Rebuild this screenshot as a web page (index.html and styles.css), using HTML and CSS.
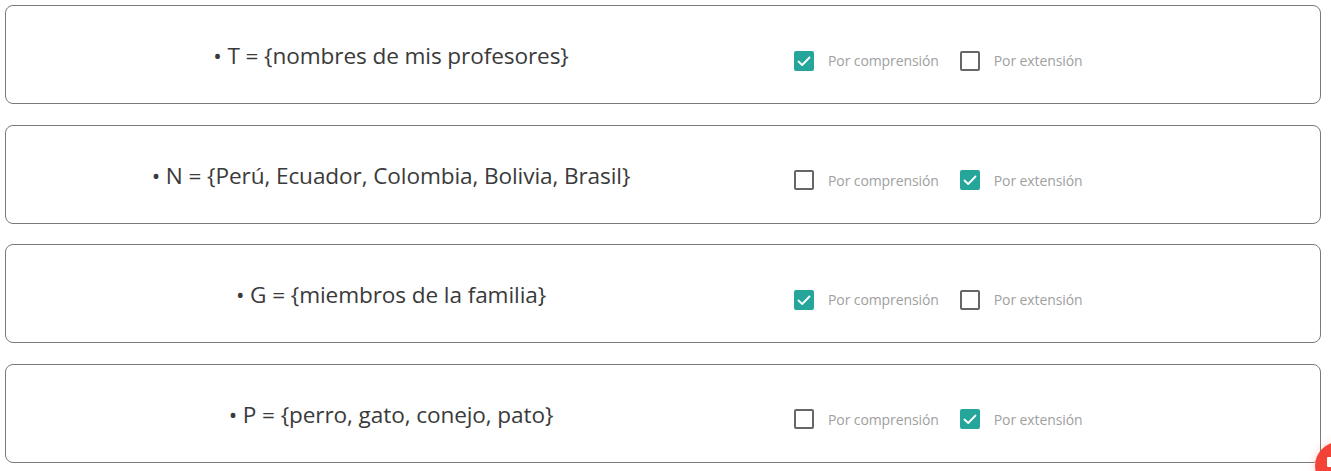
FILE: index.html
```html
<!DOCTYPE html>
<html lang="es">
<head>
<meta charset="utf-8">
<title>Conjuntos</title>
<link rel="stylesheet" href="styles.css">
</head>
<body>
<main class="list">
  <section class="card">
    <div class="statement">• T = {nombres de mis profesores}</div>
    <div class="options">
      <label class="opt"><span class="box checked"><svg viewBox="0 0 20 20"><path d="M4.5 10.5 L8.2 14 L15.5 6.5"/></svg></span><span class="lbl">Por comprensión</span></label>
      <label class="opt"><span class="box"></span><span class="lbl">Por extensión</span></label>
    </div>
  </section>
  <section class="card">
    <div class="statement">• N = {Perú, Ecuador, Colombia, Bolivia, Brasil}</div>
    <div class="options">
      <label class="opt"><span class="box"></span><span class="lbl">Por comprensión</span></label>
      <label class="opt"><span class="box checked"><svg viewBox="0 0 20 20"><path d="M4.5 10.5 L8.2 14 L15.5 6.5"/></svg></span><span class="lbl">Por extensión</span></label>
    </div>
  </section>
  <section class="card">
    <div class="statement">• G = {miembros de la familia}</div>
    <div class="options">
      <label class="opt"><span class="box checked"><svg viewBox="0 0 20 20"><path d="M4.5 10.5 L8.2 14 L15.5 6.5"/></svg></span><span class="lbl">Por comprensión</span></label>
      <label class="opt"><span class="box"></span><span class="lbl">Por extensión</span></label>
    </div>
  </section>
  <section class="card">
    <div class="statement">• P = {perro, gato, conejo, pato}</div>
    <div class="options">
      <label class="opt"><span class="box"></span><span class="lbl">Por comprensión</span></label>
      <label class="opt"><span class="box checked"><svg viewBox="0 0 20 20"><path d="M4.5 10.5 L8.2 14 L15.5 6.5"/></svg></span><span class="lbl">Por extensión</span></label>
    </div>
  </section>
</main>
<div class="fab"><span class="fab-icon"></span></div>
</body>
</html>
```

FILE: styles.css
```css
html, body {
  margin: 0;
  padding: 0;
  background: #ffffff;
  overflow: hidden;
}
body {
  font-family: "Open Sans", "Noto Sans", sans-serif;
  color: #333333;
}
.list {
  display: flex;
  flex-direction: column;
  gap: 20.5px;
  padding: 5px 10px 0 5px;
}
.card {
  box-sizing: border-box;
  height: 99px;
  border: 1px solid #7a7a7a;
  border-radius: 8px;
  display: flex;
  align-items: center;
  padding-top: 2px;
}
.statement {
  width: 770px;
  text-align: center;
  font-size: 22.6px;
  font-weight: 400;
  color: #3a3a3a;
  letter-spacing: -0.1px;
}
.options {
  display: flex;
  align-items: center;
  gap: 21px;
  padding-left: 18px;
  padding-top: 10px;
}
.opt {
  display: flex;
  align-items: center;
  gap: 14px;
}
.box {
  box-sizing: border-box;
  width: 20px;
  height: 20px;
  border: 2px solid #666666;
  border-radius: 2px;
  display: flex;
  align-items: center;
  justify-content: center;
}
.box.checked {
  background: #26a69a;
  border-color: #26a69a;
}
.box svg {
  width: 20px;
  height: 20px;
  flex: none;
  fill: none;
  stroke: #ffffff;
  stroke-width: 1.8;
  stroke-linecap: round;
  stroke-linejoin: round;
}
.lbl {
  font-size: 14px;
  color: #a0a0a0;
  letter-spacing: -0.1px;
}
.fab {
  position: fixed;
  left: 1315px;
  top: 442px;
  width: 48px;
  height: 48px;
  border-radius: 50%;
  background: #f44336;
  box-shadow: 0 0 6px 3px rgba(244, 67, 54, 0.12);
}
.fab-icon {
  position: absolute;
  left: 12px;
  top: 15px;
  width: 8px;
  height: 10px;
  background: #ffffff;
  border-radius: 1px;
}
```
